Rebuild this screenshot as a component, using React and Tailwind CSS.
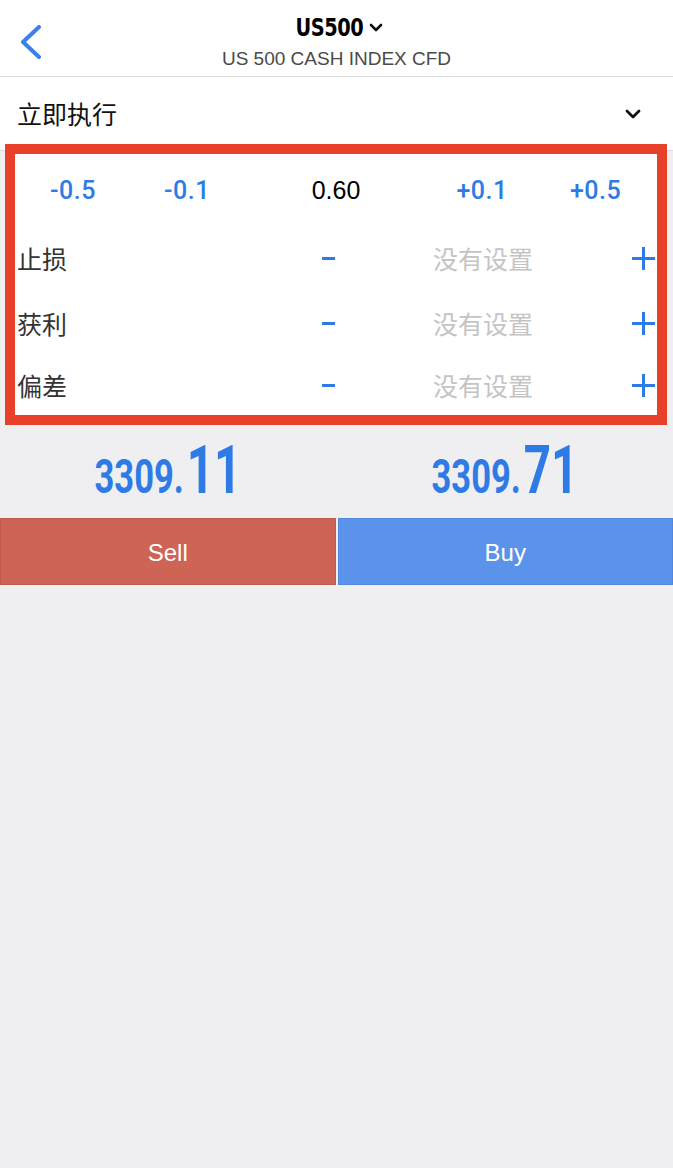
import React from 'react';

const steps = [
  { label: '-0.5', blue: true },
  { label: '-0.1', blue: true },
  { label: '0.60', blue: false },
  { label: '+0.1', blue: true },
  { label: '+0.5', blue: true },
];

const levels = [
  { label: '止损', h: 'h-[65px]' },
  { label: '获利', h: 'h-[65px]' },
  { label: '偏差', h: 'h-[59px]' },
];

const cjk = { fontFamily: '"Noto Sans CJK SC", "Noto Sans", sans-serif' };
const cond = { fontFamily: '"DejaVu Sans Condensed", "DejaVu Sans", sans-serif', fontStretch: 'condensed' };
const roboto = { fontFamily: 'Roboto, "Liberation Sans", sans-serif' };

const Price = ({ big, small }) => (
  <div className="flex-1 flex items-end justify-center text-[#2f7be6]" style={roboto}>
    <div className="scale-x-[0.72] flex items-baseline whitespace-nowrap">
      <span className="text-[48px] font-bold leading-none">{small}</span>
      <span className="text-[66px] font-bold leading-none ml-[4px]">{big}</span>
    </div>
  </div>
);

const LevelRow = ({ label, h }) => (
  <div className={`grid grid-cols-[298px_30px_280px_1fr] items-center ${h}`}>
    <span className="pl-[2px] text-[25px] text-[#333]" style={cjk}>{label}</span>
    <div className="flex justify-center">
      <div className="w-[13px] h-[3px] bg-[#2f7be6]" />
    </div>
    <span className="text-center text-[25px] text-[#c4c4c4]" style={cjk}>没有设置</span>
    <div className="flex justify-end pr-[2px]">
      <svg width="23" height="23" viewBox="0 0 23 23">
        <path d="M11.5 0v23M0 11.5h23" stroke="#2f7be6" strokeWidth="3" />
      </svg>
    </div>
  </div>
);

export default function App() {
  return (
    <div className="w-[673px] min-h-[1168px] bg-[#efeff2]" style={{ fontFamily: '"Liberation Sans", Arial, sans-serif' }}>
      {/* header */}
      <div className="relative h-[77px] bg-white border-b border-[#dcdcdc] flex flex-col items-center">
        <button className="absolute left-[20px] top-[25px]">
          <svg width="22" height="34" viewBox="0 0 22 34" fill="none">
            <path d="M19 2L3 17l16 15" stroke="#3a80ea" strokeWidth="4" strokeLinecap="round" strokeLinejoin="round" />
          </svg>
        </button>
        <div className="flex items-center mt-[12px] h-[30px]">
          <span className="text-[25px] font-bold text-black leading-none scale-x-[0.86] tracking-[-0.5px]" style={cond}>US500</span>
          <svg width="14" height="9" viewBox="0 0 14 9" fill="none" className="ml-[1px] mt-[1px]">
            <path d="M2 2l5 5 5-5" stroke="#111" strokeWidth="2.6" strokeLinecap="round" strokeLinejoin="round" />
          </svg>
        </div>
        <div className="text-[19px] text-[#4a4a4a] leading-none mt-[7px]">US 500 CASH INDEX CFD</div>
      </div>

      {/* execution type */}
      <div className="h-[74px] bg-white border-b border-[#dcdcdc] flex items-center justify-between pl-[17px] pr-[32px]">
        <span className="text-[25px] text-[#111]" style={cjk}>立即执行</span>
        <svg width="16" height="10" viewBox="0 0 16 10" fill="none">
          <path d="M2 2l6 6 6-6" stroke="#111" strokeWidth="2.8" strokeLinecap="round" strokeLinejoin="round" />
        </svg>
      </div>

      {/* highlighted form */}
      <div className="relative z-10 -mt-[7px] mx-[5px] w-[662px] border-[10px] border-[#e8412a] bg-white">
        <div className="grid grid-cols-[116px_112px_186px_106px_121px] h-[72px] items-center pt-[2px]">
          {steps.map(s =>
            s.blue ? (
              <span key={s.label} className="text-center text-[25px] text-[#2f7be6] font-medium tracking-[0.5px]" style={roboto}>
                {s.label}
              </span>
            ) : (
              <span key={s.label} className="text-center text-[25px] text-black">
                {s.label}
              </span>
            )
          )}
        </div>
        {levels.map(l => (
          <LevelRow key={l.label} label={l.label} h={l.h} />
        ))}
      </div>

      {/* prices */}
      <div className="flex h-[93px] pb-[14px]">
        <Price small="3309." big="11" />
        <Price small="3309." big="71" />
      </div>

      {/* actions */}
      <div className="flex h-[67px] gap-[2px]">
        <button className="flex-1 bg-[#cd6455] border border-[#c05a4c] text-white text-[24px] pt-[2px]">Sell</button>
        <button className="flex-1 bg-[#5b93ea] border border-[#5288de] text-white text-[24px] pt-[2px]">Buy</button>
      </div>
    </div>
  );
}
